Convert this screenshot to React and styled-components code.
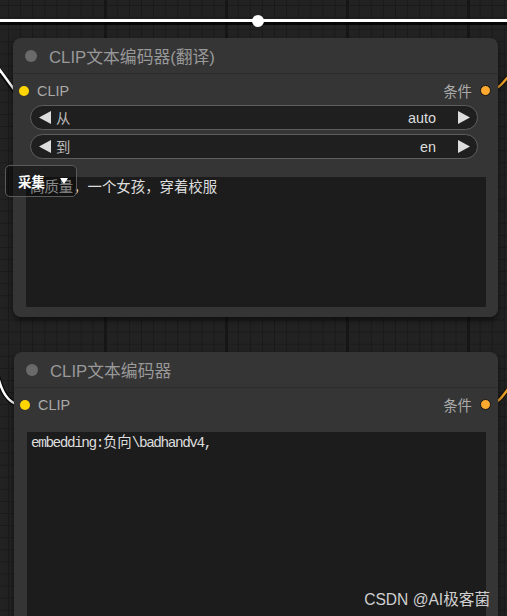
import React from 'react'
import styled, { createGlobalStyle } from 'styled-components'

const GlobalStyle = createGlobalStyle`
  html, body {
    margin: 0;
    padding: 0;
    background: #202020;
  }
  body {
    font-family: "Liberation Sans", "Noto Sans CJK SC", Arial, sans-serif;
  }
`

const Canvas = styled.div`
  position: relative;
  width: 507px;
  height: 616px;
  overflow: hidden;
  background-color: #222;
  background-image:
    linear-gradient(90deg, #161616 3px, transparent 3px),
    linear-gradient(90deg, #1a1a1a 1px, transparent 1px),
    linear-gradient(0deg, #1a1a1a 1px, transparent 1px);
  background-size: 121px 100%, 12.1px 100%, 100% 12.1px;
  background-position: 104px 0, 8px 0, 0 6px;
`

const Wires = styled.svg`
  position: absolute;
  left: 0;
  top: 0;
  z-index: 0;
`

const Node = styled.div`
  position: absolute;
  left: ${ p => p.$left }px;
  top: ${ p => p.$top }px;
  width: ${ p => p.$width }px;
  height: ${ p => p.$height }px;
  display: flex;
  flex-direction: column;
  background: #353535;
  border-radius: 8px;
  box-shadow: 0 3px 6px rgba(0, 0, 0, .55);
  z-index: 1;
`

const TitleBar = styled.div`
  flex: none;
  height: 36px;
  display: flex;
  align-items: center;
  gap: 12px;
  padding-left: 12px;
  padding-top: 1px;
  box-sizing: border-box;
  border-bottom: 1px solid #2c2c2c;
  color: #999;
  font-size: 16.8px;
`

const TitleDot = styled.span`
  width: 12px;
  height: 12px;
  border-radius: 50%;
  background: #6a6a6a;
`

const SlotRow = styled.div`
  flex: none;
  box-sizing: border-box;
  height: 31px;
  display: flex;
  align-items: center;
  padding: 2px 7px 0 6px;
  color: #aaa;
  font-size: 14.4px;
`

const SlotLabel = styled.span`
  flex: 1;
  text-align: ${ p => p.$right ? 'right' : 'left' };
  margin: 0 8px;
`

const SlotDot = styled.span`
  box-sizing: border-box;
  width: ${ p => p.$out ? 11 : 10 }px;
  height: ${ p => p.$out ? 11 : 10 }px;
  border-radius: 50%;
  background: ${ p => p.$color };
  border: ${ p => p.$out ? '1px solid #111' : 'none' };
`

const Widgets = styled.div`
  display: flex;
  flex-direction: column;
  gap: 4px;
  margin: 0 20px 0 17px;
`

const Combo = styled.div`
  box-sizing: border-box;
  height: 25px;
  display: flex;
  align-items: center;
  padding: 0 7px 0 8px;
  background: #1f1f1f;
  border: 1px solid #5e5e5e;
  border-radius: 13px;
  font-size: 14.4px;
`

const ComboLabel = styled.span`
  flex: 1;
  margin-left: 5px;
  color: #bbb;
`

const ComboValue = styled.span`
  margin-right: 22px;
  color: #ddd;
`

const Arrow = ({ dir }) => (
  <svg width='12' height='13' viewBox='0 0 12 13'>
    <polygon
      points={ dir === 'left' ? '12,0 12,13 0,6.5' : '0,0 0,13 12,6.5' }
      fill='#ddd'
    />
  </svg>
)

const TextArea = styled.div`
  flex: 1;
  margin: ${ p => p.$top }px 12px ${ p => p.$bottom }px 13px;
  padding: ${ p => p.$pad }px 4px;
  background: #1c1c1c;
  color: #ddd;
  font-family: "Liberation Mono", "Noto Sans CJK SC", monospace;
  font-size: 14.4px;
  line-height: 17px;
  white-space: pre;
`

const Narrow = styled.span`
  letter-spacing: -1.44px;
`

const Collect = styled.div`
  position: absolute;
  left: -8px;
  top: 127px;
  box-sizing: border-box;
  width: 72px;
  height: 32px;
  display: flex;
  align-items: center;
  gap: 15px;
  padding-left: 12px;
  background: rgba(0, 0, 0, .38);
  border: 1.5px solid #5a5a5a;
  border-radius: 5px;
  color: #fff;
  font-weight: bold;
  font-size: 13.5px;
  font-family: "Noto Sans CJK SC", sans-serif;
  z-index: 2;
`

const Caret = () => (
  <svg width='8' height='6' viewBox='0 0 8 6'>
    <polygon points='0,0 8,0 4,6' fill='#fff' />
  </svg>
)

const Watermark = styled.div`
  position: absolute;
  right: 17px;
  top: 587px;
  color: #cfcfcf;
  font-size: 15.6px;
  z-index: 3;
`

const Slots = () => (
  <SlotRow>
    <SlotDot $color='#ffd500' />
    <SlotLabel>CLIP</SlotLabel>
    <SlotLabel $right>条件</SlotLabel>
    <SlotDot $out $color='#ffa931' />
  </SlotRow>
)

export default () => (
  <Canvas>
    <GlobalStyle />
    <Wires width='507' height='616'>
      <path d='M 0 23.5 L 507 23.5' stroke='#000' strokeWidth='3' opacity='.8' />
      <path d='M 0 20.5 L 507 20.5' stroke='#fff' strokeWidth='3' />
      <circle cx='258' cy='21' r='6' fill='#fff' />
      <path d='M -3 67 L 16 93' stroke='#000' strokeWidth='5' opacity='.7' fill='none' />
      <path d='M -3 66 L 16 92' stroke='#fff' strokeWidth='2.5' fill='none' />
      <path d='M -2 377 C 2 392, 7 401, 18 405' stroke='#000' strokeWidth='5' opacity='.7' fill='none' />
      <path d='M -2 377 C 2 392, 7 401, 18 405' stroke='#fff' strokeWidth='2.5' fill='none' />
      <path d='M 490 91 C 497 90, 502 84, 508 77' stroke='#111' strokeWidth='4.5' fill='none' />
      <path d='M 490 91 C 497 90, 502 84, 508 77' stroke='#e99e28' strokeWidth='2.5' fill='none' />
      <path d='M 490 405 C 497 404, 502 397, 508 389' stroke='#111' strokeWidth='4.5' fill='none' />
      <path d='M 490 405 C 497 404, 502 397, 508 389' stroke='#e99e28' strokeWidth='2.5' fill='none' />
    </Wires>

    <Node $left={ 13 } $top={ 38 } $width={ 485 } $height={ 279 }>
      <TitleBar>
        <TitleDot />
        CLIP文本编码器(翻译)
      </TitleBar>
      <Slots />
      <Widgets>
        <Combo>
          <Arrow dir='left' />
          <ComboLabel>从</ComboLabel>
          <ComboValue>auto</ComboValue>
          <Arrow dir='right' />
        </Combo>
        <Combo>
          <Arrow dir='left' />
          <ComboLabel>到</ComboLabel>
          <ComboValue>en</ComboValue>
          <Arrow dir='right' />
        </Combo>
      </Widgets>
      <TextArea $top={ 18 } $bottom={ 10 } $pad={ 3 }>高质量，一个女孩，穿着校服</TextArea>
      <Collect>
        采集
        <Caret />
      </Collect>
    </Node>

    <Node $left={ 14 } $top={ 352 } $width={ 484 } $height={ 320 }>
      <TitleBar>
        <TitleDot />
        CLIP文本编码器
      </TitleBar>
      <Slots />
      <TextArea $top={ 13 } $bottom={ 10 } $pad={ 3 }>
        <Narrow>embedding:</Narrow>负向<Narrow>\badhandv4,</Narrow>
      </TextArea>
    </Node>

    <Watermark>CSDN @AI极客菌</Watermark>
  </Canvas>
)
